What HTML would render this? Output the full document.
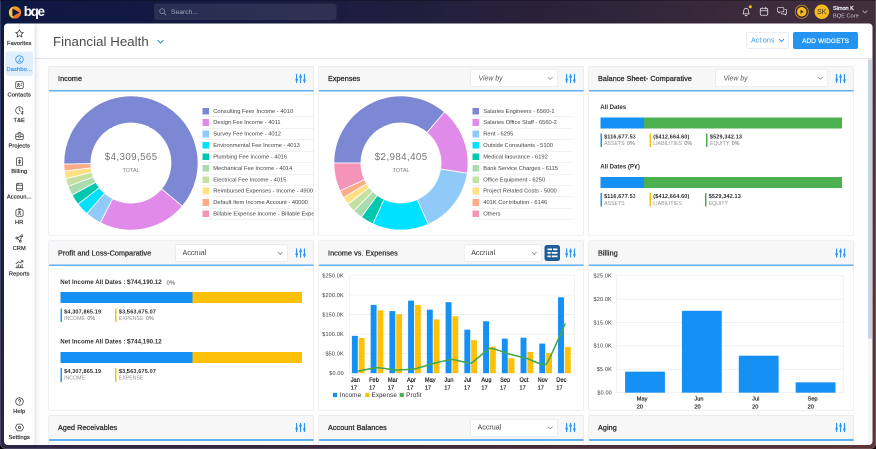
<!DOCTYPE html>
<html><head><meta charset="utf-8"><title>Financial Health</title>
<style>
*{box-sizing:border-box;margin:0;padding:0}
html,body{width:876px;height:449px;overflow:hidden;background:#000}
body{font-family:"Liberation Sans",Arial,sans-serif;}
#root{position:absolute;left:0;top:0;width:1752px;height:898px;transform:scale(.5);transform-origin:0 0;overflow:hidden;will-change:transform;
 border-radius:0 0 11px 11px;background:#1c1d40}
.bg{position:absolute}
#bgT{left:0;top:0;width:1752px;height:60px;background:linear-gradient(90deg,#0d1842 0%,#121a42 18%,#1c1d40 40%,#2b2239 63%,#3c2b3b 86%,#43303f 100%)}
#bgL{left:0;top:40px;width:20px;height:858px;background:linear-gradient(180deg,#0d1842,#2a2546)}
#bgR{left:1732px;top:40px;width:20px;height:858px;background:linear-gradient(180deg,#43303f,#5c3538)}
#bgB{left:0;top:878px;width:1752px;height:20px;background:linear-gradient(90deg,#2a2546 0%,#3f2a3a 50%,#5c3538 100%)}
#edge{position:absolute;left:0;top:0;width:1752px;height:898px;border:2px solid rgba(255,255,255,.16);border-top:2px solid rgba(0,0,0,.25);border-radius:0 0 11px 11px;z-index:50;pointer-events:none}
#top{position:absolute;left:0;top:0;width:1752px;height:46px}
#logo{position:absolute;left:16px;top:11.400px}
#logot{position:absolute;left:47.500px;top:8.300px;font-weight:700;font-size:27px;letter-spacing:-2.700px;color:#fff;line-height:30px}
#search{position:absolute;left:308px;top:7px;width:365px;height:32.500px;border-radius:6px;background:rgba(255,255,255,.095);color:#a0a5ba;font-size:13.500px;line-height:33px;padding-left:34px}
#search svg{position:absolute;left:10px;top:9px}
.ti{position:absolute;top:0}
#name{position:absolute;left:1666px;top:9px;color:#fff;font-size:11px;font-weight:400;-webkit-text-stroke:.45px #fff;line-height:15px;white-space:nowrap}
#name span{-webkit-text-stroke:0;color:#c9c6cf;font-size:11.3px}
#panel{position:absolute;left:8px;top:46.700px;width:1737px;height:843.500px;background:#fff;border-radius:8px;overflow:hidden}
#side{position:absolute;left:0;top:0;width:61px;height:843px;background:#fff;box-shadow:2px 0 10px rgba(60,80,120,.2);z-index:5}
.si{position:absolute;left:3px;width:55px;height:49px;text-align:center;font-size:11.400px;font-weight:400;-webkit-text-stroke:.450px #333;color:#333;border-radius:6px;letter-spacing:.250px}
.si svg{position:absolute;left:17.5px;top:6px}
.si span{position:absolute;left:-4px;right:-4px;top:29px;line-height:13px}
.si.act{background:#e1effc;color:#3d9bef;-webkit-text-stroke-color:#3d9bef}
#main{position:absolute;left:61px;top:0;width:1676px;height:843px;background:#fefefe}
#hdr{position:absolute;left:0;top:0;width:1676px;height:71px;background:#fff;border-bottom:2px solid #e1e7ef}
#hdr h1{position:absolute;left:37px;top:20px;font-size:26.5px;font-weight:400;color:#4a4a4a;line-height:32px;letter-spacing:.1px;white-space:nowrap}
#hdr .chev{position:absolute;left:245px;top:32px}
#act{position:absolute;left:1423.600px;top:17.600px;width:84.400px;height:33px;border:1.500px solid #d3dcea;border-radius:2.500px;color:#3d9bef;font-size:14.300px;line-height:30px;padding-left:8.400px;background:#fff}
#act svg{position:absolute;left:63.400px;top:12px}
#add{position:absolute;left:1517.300px;top:17.600px;width:129.600px;height:34px;border-radius:4px;background:#2494f1;color:#fff;font-size:13px;font-weight:400;-webkit-text-stroke:.400px #fff;line-height:35px;text-align:center;letter-spacing:.200px}
#sb{position:absolute;left:1667px;top:72px;width:7.5px;height:771px;background:#f4f6f9}
#sb div{position:absolute;left:0;top:0;width:7.5px;height:559px;background:#c8d3e2;border-radius:0 0 4px 4px}
.card{position:absolute;width:530.500px;height:339.400px;background:#fff;border:1.200px solid #dce2ea;border-radius:2.500px;overflow:hidden}
.card{margin-left:-69px;margin-top:-46.7px}
.ch{position:relative;height:50.500px;background:linear-gradient(#f7f7f7,#f7f7f7) no-repeat;background-size:100% 47px}
.ln{position:absolute;left:0;width:100%;background:#62aff2}
.ch b{position:absolute;left:18px;top:15.900px;font-size:14.300px;font-weight:400;-webkit-text-stroke:.700px #363636;line-height:16px;color:#363636;white-space:nowrap;letter-spacing:.200px;text-shadow:0 0 3px #fff}
.flt{position:absolute;left:493.100px;top:14px}
.dd{position:absolute;top:6.500px;height:35px;background:#fff;border:1.500px solid #d9dfe9;border-radius:3px;font-size:14.300px;color:#3c3c3c;line-height:31px;padding-left:13px}
.dd.it{font-style:italic;color:#585858;font-size:13.800px;padding-left:15px;line-height:33.500px}
.dd svg{position:absolute;right:9px;top:13px}
.tb{position:absolute;left:450.600px;top:8.300px;width:31.600px;height:31.400px;border-radius:5px;background:#1f5d99}
.tb svg{position:absolute;left:6px;top:7px}
.cb{position:relative;height:288px}
.dn{position:absolute;left:0;top:0}
.dt{font-size:19.500px;fill:#787878;letter-spacing:.800px}
.dl{font-size:10.5px;fill:#777;letter-spacing:.2px}
.lgs{position:absolute;left:307px;top:28px;width:260px}
.lg{position:relative;height:22.850px;border-bottom:1.5px solid #e3e3e3;white-space:nowrap;font-size:11.500px;line-height:21px;color:#444}
.lg i{position:absolute;left:0;top:4px;width:13.4px;height:13.4px}
.lg span{position:absolute;left:21.5px;top:0}
.cmp{position:absolute;left:22.600px;width:500px}
.cl{position:relative;top:1.500px;font-size:12.300px;font-weight:700;color:#333;line-height:14px;height:14px;white-space:nowrap;letter-spacing:-.100px}
.pl .cl{letter-spacing:.050px;top:1.700px}
.cl em{font-style:normal;font-weight:400;color:#3a3a3a;font-size:11.600px;margin-left:6px;letter-spacing:.300px;position:relative;top:1px}
.bar{position:absolute;left:0;top:29px;height:22px}
.bar div{height:22px}
.ci{position:absolute;top:61.500px;border-left:3px solid;padding-left:4.600px;font-size:10.400px;line-height:13.400px;white-space:nowrap;color:#555;height:27px}
.ci b{color:#2e2e2e;font-size:11px;letter-spacing:.300px}
.ci span{color:#939393;letter-spacing:0}
.ci em{font-style:normal;color:#666;margin-left:2px;font-size:10.800px}
.chart{position:absolute;left:0;top:0}
.ax{font-size:11px;fill:#3a3a3a;letter-spacing:.300px}
.xl{font-size:11.100px;font-weight:400;fill:#2e2e2e;stroke:#2e2e2e;stroke-width:.500px;letter-spacing:.150px}
.lt{font-size:12.700px;fill:#333;letter-spacing:.250px}
</style></head><body>
<div id="root">
 <div class="bg" id="bgL"></div><div class="bg" id="bgR"></div><div class="bg" id="bgB"></div><div class="bg" id="bgT"></div>
 <div id="top">
  <svg id="logo" width="28" height="28" viewBox="0 0 28 28"><defs><linearGradient id="lg1" x1="0.350" y1="0" x2="0.800" y2="1"><stop offset="0" stop-color="#f7aa2e"/><stop offset="0.500" stop-color="#f48a2c"/><stop offset="1" stop-color="#ee5c2a"/></linearGradient><clipPath id="lc"><circle cx="14" cy="14" r="12.200"/></clipPath></defs><circle cx="14" cy="14" r="12.200" fill="url(#lg1)"/><ellipse cx="5.500" cy="15" rx="6.500" ry="13" fill="#f7cb3c" clip-path="url(#lc)"/><path d="M9.600 7.200L21.400 14L9.600 20.800Z" fill="#141a44" stroke="#141a44" stroke-width="1.600" stroke-linejoin="round"/></svg>
  <div id="logot">bqe</div>
  <div id="search"><svg width="15" height="15" viewBox="0 0 15 15"><circle cx="6.3" cy="6.3" r="4.8" fill="none" stroke="#9097ad" stroke-width="1.5"/><path d="M10 10L13.6 13.6" stroke="#9097ad" stroke-width="1.5" stroke-linecap="round"/></svg>Search...</div>
  <svg class="ti" style="left:1480px" width="26" height="46" viewBox="0 0 26 46"><path transform="translate(0 -1.800)" d="M6 29.5H18.5C17 27.5 16.8 26 16.8 23A4.6 4.6 0 0 0 7.6 23C7.6 26 7.4 27.5 6 29.5ZM10.4 32A2 2 0 0 0 14.2 32" fill="none" stroke="#e8e6ee" stroke-width="1.6" stroke-linejoin="round" stroke-linecap="round"/><circle cx="20.6" cy="13.6" r="3" fill="#f8b91c"/></svg>
  <svg class="ti" style="left:1517px" width="24" height="46" viewBox="0 0 24 46"><rect x="3.5" y="16.5" width="15" height="14" rx="3" fill="none" stroke="#e8e6ee" stroke-width="1.6"/><path d="M3.5 21.5H18.5M7.5 14.5V18M14.5 14.5V18" stroke="#e8e6ee" stroke-width="1.6" stroke-linecap="round"/></svg>
  <svg class="ti" style="left:1551px" width="26" height="46" viewBox="0 0 26 46"><g transform="translate(13 22.500) scale(.920) translate(-13 -22.500)"><path d="M5.5 14.5H15A2 2 0 0 1 17 16.500V22A2 2 0 0 1 15 24H9L6 26.500V24H5.500A2 2 0 0 1 3.500 22V16.500A2 2 0 0 1 5.500 14.500Z" fill="none" stroke="#e8e6ee" stroke-width="1.5" stroke-linejoin="round"/><path d="M19.500 19H21A2 2 0 0 1 23 21V26.500A2 2 0 0 1 21 28.500V31L18 28.500H13A2 2 0 0 1 11.200 27" fill="none" stroke="#e8e6ee" stroke-width="1.500" stroke-linejoin="round" stroke-linecap="round"/></g></svg>
  <svg class="ti" style="left:1588px" width="32" height="46" viewBox="0 0 32 46"><circle cx="15.500" cy="23.500" r="13.200" fill="none" stroke="#c99a1c" stroke-width="1.500"/><circle cx="15.500" cy="23.500" r="9.400" fill="#f8b91c"/><path d="M13 19.600L19.400 23.500L13 27.400Z" fill="#3a2630"/></svg>
  <svg class="ti" style="left:1628px" width="32" height="46" viewBox="0 0 32 46"><circle cx="15.600" cy="23.500" r="14.600" fill="#f8b91c"/><text x="15.600" y="28.300" text-anchor="middle" font-size="14" font-weight="400" stroke="#5f5730" stroke-width=".4" fill="#5f5730" font-family="Liberation Sans, Arial, sans-serif">SK</text></svg>
  <div id="name">Simon K<br><span>BQE Core</span></div>
  <svg class="ti" style="left:1722px" width="16" height="46" viewBox="0 0 16 46"><path d="M3.400 21.400L8 25.800L12.600 21.400" fill="none" stroke="#c4bfcb" stroke-width="1.400" stroke-linecap="round" stroke-linejoin="round"/></svg>
 </div>
 <div id="panel">
  <div id="side"><div class="si" style="top:4.8px"><svg viewBox="0 0 20 20" width="20" height="20"><path d="M10 2.2L12.3 7.3L17.8 7.9L13.7 11.6L14.9 17L10 14.2L5.1 17L6.3 11.6L2.2 7.9L7.7 7.3Z" fill="none" stroke="#3c3c3c" stroke-width="1.5" stroke-linecap="round" stroke-linejoin="round"/></svg><span>Favorites</span></div><div class="si act" style="top:55.9px"><svg viewBox="0 0 20 20" width="20" height="20"><circle cx="10" cy="10" r="7.6" fill="none" stroke="#2f8fe8" stroke-width="1.5" stroke-linecap="round" stroke-linejoin="round"/><path d="M9.2 11.5L12.6 6.4M7.4 13.6H12.6" fill="none" stroke="#2f8fe8" stroke-width="1.5" stroke-linecap="round" stroke-linejoin="round"/></svg><span>Dashbo...</span></div><div class="si" style="top:107.0px"><svg viewBox="0 0 20 20" width="20" height="20"><rect x="2.5" y="3.2" width="15" height="13.6" rx="2.6" fill="none" stroke="#3c3c3c" stroke-width="1.5" stroke-linecap="round" stroke-linejoin="round"/><circle cx="8" cy="8.6" r="1.5" fill="none" stroke="#3c3c3c" stroke-width="1.5" stroke-linecap="round" stroke-linejoin="round"/><path d="M5.5 13.2C6 11.4 10 11.4 10.5 13.2M12.8 7.6H14.6M12.8 10.4H14.6" fill="none" stroke="#3c3c3c" stroke-width="1.5" stroke-linecap="round" stroke-linejoin="round"/></svg><span>Contacts</span></div><div class="si" style="top:158.2px"><svg viewBox="0 0 20 20" width="20" height="20"><path d="M9.5 17A7.2 7.2 0 1 1 16.6 8.6" fill="none" stroke="#3c3c3c" stroke-width="1.5" stroke-linecap="round" stroke-linejoin="round"/><path d="M9.5 5.6V9.8L12 11.4" fill="none" stroke="#3c3c3c" stroke-width="1.5" stroke-linecap="round" stroke-linejoin="round"/><path d="M17.6 12.6C15.4 11.4 13.6 13 15.6 14.4C17.8 15.6 16 17.6 13.6 16.2M15.6 11.2V18" fill="none" stroke="#3c3c3c" stroke-width="1.5" stroke-linecap="round" stroke-linejoin="round" stroke-width="1.2"/></svg><span>T&amp;E</span></div><div class="si" style="top:209.4px"><svg viewBox="0 0 20 20" width="20" height="20"><rect x="2.5" y="6" width="15" height="11" rx="2.4" fill="none" stroke="#3c3c3c" stroke-width="1.5" stroke-linecap="round" stroke-linejoin="round"/><path d="M7 6V4.6A1.4 1.4 0 0 1 8.4 3.2H11.6A1.4 1.4 0 0 1 13 4.6V6M2.5 11H8M12 11H17.5" fill="none" stroke="#3c3c3c" stroke-width="1.5" stroke-linecap="round" stroke-linejoin="round"/><rect x="8" y="9.6" width="4" height="2.8" rx=".8" fill="none" stroke="#3c3c3c" stroke-width="1.5" stroke-linecap="round" stroke-linejoin="round"/></svg><span>Projects</span></div><div class="si" style="top:260.5px"><svg viewBox="0 0 20 20" width="20" height="20"><path d="M4 4.6A2 2 0 0 1 6 2.6H14A2 2 0 0 1 16 4.6V17.4H4Z" fill="none" stroke="#3c3c3c" stroke-width="1.5" stroke-linecap="round" stroke-linejoin="round"/><path d="M12 7.8C10.4 6.6 8 7.4 8.6 9C9.2 10.4 12 9.8 12 11.6C12 13 9.6 13.4 8 12.2M10 6V14.4" fill="none" stroke="#3c3c3c" stroke-width="1.5" stroke-linecap="round" stroke-linejoin="round" stroke-width="1.2"/></svg><span>Billing</span></div><div class="si" style="top:311.6px"><svg viewBox="0 0 20 20" width="20" height="20"><rect x="4" y="2.6" width="12" height="14.8" rx="3" fill="none" stroke="#3c3c3c" stroke-width="1.5" stroke-linecap="round" stroke-linejoin="round"/><path d="M4 6.6H16M7 2.6V6.6M4 13.4H16" fill="none" stroke="#3c3c3c" stroke-width="1.5" stroke-linecap="round" stroke-linejoin="round" stroke-width="1.2"/></svg><span>Accoun...</span></div><div class="si" style="top:362.8px"><svg viewBox="0 0 20 20" width="20" height="20"><rect x="2.8" y="4.6" width="14.4" height="12.8" rx="2.6" fill="none" stroke="#3c3c3c" stroke-width="1.5" stroke-linecap="round" stroke-linejoin="round"/><circle cx="10" cy="9" r="1.5" fill="none" stroke="#3c3c3c" stroke-width="1.5" stroke-linecap="round" stroke-linejoin="round"/><path d="M7 14.4C7.4 11.8 12.6 11.8 13 14.4M8 2.4H12M10 2.4V4.6" fill="none" stroke="#3c3c3c" stroke-width="1.5" stroke-linecap="round" stroke-linejoin="round"/></svg><span>HR</span></div><div class="si" style="top:413.9px"><svg viewBox="0 0 20 20" width="20" height="20"><circle cx="14.6" cy="4.6" r="1.9" fill="none" stroke="#3c3c3c" stroke-width="1.5" stroke-linecap="round" stroke-linejoin="round"/><circle cx="4.6" cy="9" r="1.9" fill="none" stroke="#3c3c3c" stroke-width="1.5" stroke-linecap="round" stroke-linejoin="round"/><circle cx="11.6" cy="15.6" r="1.9" fill="none" stroke="#3c3c3c" stroke-width="1.5" stroke-linecap="round" stroke-linejoin="round"/><path d="M12.8 5.4L6.4 8.2M6 10.4L10.4 14.2M13.8 6.4L12.2 13.8" fill="none" stroke="#3c3c3c" stroke-width="1.5" stroke-linecap="round" stroke-linejoin="round"/></svg><span>CRM</span></div><div class="si" style="top:465.1px"><svg viewBox="0 0 20 20" width="20" height="20"><path d="M2.6 17.4H17.4M5 17V13M8.4 17V11M11.8 17V12.6M15.2 17V10" fill="none" stroke="#3c3c3c" stroke-width="1.5" stroke-linecap="round" stroke-linejoin="round" stroke-width="1.7"/><path d="M3 9.6L8 5.4L11.6 8L16.6 3.4M13.6 3.2H16.8V6.2" fill="none" stroke="#3c3c3c" stroke-width="1.5" stroke-linecap="round" stroke-linejoin="round" stroke-width="1.2"/></svg><span>Reports</span></div><div class="si" style="top:740.8px"><svg viewBox="0 0 20 20" width="20" height="20"><circle cx="10" cy="10" r="7.6" fill="none" stroke="#3c3c3c" stroke-width="1.5" stroke-linecap="round" stroke-linejoin="round"/><path d="M7.8 8A2.2 2.2 0 1 1 10.8 10.2C10.2 10.5 10 10.9 10 11.6M10 14V14.2" fill="none" stroke="#3c3c3c" stroke-width="1.5" stroke-linecap="round" stroke-linejoin="round"/></svg><span>Help</span></div><div class="si" style="top:792.3px"><svg viewBox="0 0 20 20" width="20" height="20"><path d="M6.800 3.200H13.200Q14.400 3.200 15 4.200L17.600 9Q18.100 10 17.600 11L15 15.800Q14.400 16.800 13.200 16.800H6.800Q5.600 16.800 5 15.800L2.400 11Q1.900 10 2.400 9L5 4.200Q5.600 3.200 6.800 3.200Z" fill="none" stroke="#3c3c3c" stroke-width="1.5" stroke-linecap="round" stroke-linejoin="round"/><circle cx="10" cy="10" r="2.300" fill="none" stroke="#3c3c3c" stroke-width="1.5" stroke-linecap="round" stroke-linejoin="round"/></svg><span>Settings</span></div></div>
  <div id="main">
   <div id="hdr"><h1>Financial Health</h1>
    <svg class="chev" width="14" height="9" viewBox="0 0 14 9"><path d="M1.500 1.500L7 7L12.500 1.500" fill="none" stroke="#2f8fe8" stroke-width="2" stroke-linecap="round" stroke-linejoin="round"/></svg>
    <div id="act">Actions<svg width="12" height="8" viewBox="0 0 12 8"><path d="M1.500 1.500L6 6L10.500 1.500" fill="none" stroke="#2f8fe8" stroke-width="1.800" stroke-linecap="round" stroke-linejoin="round"/></svg></div>
    <div id="add">ADD WIDGETS</div>
   </div>
   <div id="sb"><div></div></div>
   <div class="card" style="left:97px;top:132.0px"><div class="ch"><b>Income</b><svg class="flt" viewBox="0 0 20 20" width="20" height="20"><g stroke="#2d96f2" stroke-width="2.400" stroke-linecap="round" fill="#2d96f2"><path d="M2.200 2V18M10.100 2V18M17.900 2V18" fill="none"/><circle cx="2.200" cy="12.200" r="2.600" stroke="none"/><circle cx="10.100" cy="6.600" r="2.600" stroke="none"/><circle cx="17.900" cy="13.600" r="2.600" stroke="none"/></g></svg><div class="ln" style="top:46.8px;height:3.7px"></div></div><div class="cb"><svg class="dn" width="300" height="290" viewBox="0 0 300 290"><path d="M29.72 144.11A134.2 134.2 0 1 1 266.55 228.44L225.09 193.53A80 80 0 1 0 83.91 143.26Z" fill="#7c88d3" stroke="#fff" stroke-width="1.700" stroke-linejoin="round"/>
<path d="M266.55 228.44A134.2 134.2 0 0 1 102.77 261.47L127.46 213.22A80 80 0 0 0 225.09 193.53Z" fill="#E08BEA" stroke="#fff" stroke-width="1.700" stroke-linejoin="round"/>
<path d="M102.77 261.47A134.2 134.2 0 0 1 75.68 243.13L111.31 202.29A80 80 0 0 0 127.46 213.22Z" fill="#90CAF9" stroke="#fff" stroke-width="1.700" stroke-linejoin="round"/>
<path d="M75.68 243.13A134.2 134.2 0 0 1 58.00 224.44L100.77 191.14A80 80 0 0 0 111.31 202.29Z" fill="#00E0FF" stroke="#fff" stroke-width="1.700" stroke-linejoin="round"/>
<path d="M58.00 224.44A134.2 134.2 0 0 1 46.07 206.24L93.66 180.30A80 80 0 0 0 100.77 191.14Z" fill="#00C8AE" stroke="#fff" stroke-width="1.700" stroke-linejoin="round"/>
<path d="M46.07 206.24A134.2 134.2 0 0 1 38.04 188.56L88.87 169.75A80 80 0 0 0 93.66 180.30Z" fill="#A9DCB0" stroke="#fff" stroke-width="1.700" stroke-linejoin="round"/>
<path d="M38.04 188.56A134.2 134.2 0 0 1 33.41 173.33L86.11 160.68A80 80 0 0 0 88.87 169.75Z" fill="#C3E1A0" stroke="#fff" stroke-width="1.700" stroke-linejoin="round"/>
<path d="M33.41 173.33A134.2 134.2 0 0 1 30.67 158.12L84.48 151.61A80 80 0 0 0 86.11 160.68Z" fill="#FFE082" stroke="#fff" stroke-width="1.700" stroke-linejoin="round"/>
<path d="M30.67 158.12A134.2 134.2 0 0 1 29.72 144.11L83.91 143.26A80 80 0 0 0 84.48 151.61Z" fill="#FFAB88" stroke="#fff" stroke-width="1.700" stroke-linejoin="round"/><text x="164.400" y="136" text-anchor="middle" class="dt">$4,309,565</text><text x="164.200" y="159.700" text-anchor="middle" class="dl">TOTAL</text></svg><div class="lgs" style="width:260px"><div class="lg"><i style="background:#7c88d3"></i><span>Consulting Fees Income - 4010</span></div><div class="lg"><i style="background:#E08BEA"></i><span>Design Fee Income - 4011</span></div><div class="lg"><i style="background:#90CAF9"></i><span>Survey Fee Income - 4012</span></div><div class="lg"><i style="background:#00E0FF"></i><span>Environmental Fee Income - 4013</span></div><div class="lg"><i style="background:#00C8AE"></i><span>Plumbing Fee Income - 4016</span></div><div class="lg"><i style="background:#A9DCB0"></i><span>Mechanical Fee Income - 4014</span></div><div class="lg"><i style="background:#C3E1A0"></i><span>Electrical Fee Income - 4015</span></div><div class="lg"><i style="background:#FFE082"></i><span>Reimbursed Expenses - Income - 4900</span></div><div class="lg"><i style="background:#FFAB88"></i><span>Default Item Income Account - 40000</span></div><div class="lg"><i style="background:#f594b6"></i><span>Billable Expense Income - Billable Expense</span></div></div></div></div><div class="card" style="left:637px;top:132.0px"><div class="ch"><b>Expenses</b><div class="dd it" style="left:303px;width:175px;top:5.5px"><span>View by</span><svg viewBox="0 0 12 8" width="11" height="7"><path d="M1 1.5L6 6.5L11 1.5" fill="none" stroke="#666" stroke-width="1.3" stroke-linecap="round" stroke-linejoin="round"/></svg></div><svg class="flt" viewBox="0 0 20 20" width="20" height="20"><g stroke="#2d96f2" stroke-width="2.400" stroke-linecap="round" fill="#2d96f2"><path d="M2.200 2V18M10.100 2V18M17.900 2V18" fill="none"/><circle cx="2.200" cy="12.200" r="2.600" stroke="none"/><circle cx="10.100" cy="6.600" r="2.600" stroke="none"/><circle cx="17.900" cy="13.600" r="2.600" stroke="none"/></g></svg><div class="ln" style="top:46.8px;height:3.7px"></div></div><div class="cb"><svg class="dn" width="300" height="290" viewBox="0 0 300 290"><path d="M29.70 142.00A134.2 134.2 0 0 1 251.06 39.95L215.86 81.17A80 80 0 0 0 83.90 142.00Z" fill="#7c88d3" stroke="#fff" stroke-width="1.700" stroke-linejoin="round"/>
<path d="M251.06 39.95A134.2 134.2 0 0 1 296.56 162.30L242.98 154.10A80 80 0 0 0 215.86 81.17Z" fill="#E08BEA" stroke="#fff" stroke-width="1.700" stroke-linejoin="round"/>
<path d="M296.56 162.30A134.2 134.2 0 0 1 218.48 264.60L196.44 215.08A80 80 0 0 0 242.98 154.10Z" fill="#90CAF9" stroke="#fff" stroke-width="1.700" stroke-linejoin="round"/>
<path d="M218.48 264.60A134.2 134.2 0 0 1 107.61 263.82L130.34 214.62A80 80 0 0 0 196.44 215.08Z" fill="#00E0FF" stroke="#fff" stroke-width="1.700" stroke-linejoin="round"/>
<path d="M107.61 263.82A134.2 134.2 0 0 1 84.64 250.29L116.65 206.56A80 80 0 0 0 130.34 214.62Z" fill="#00C8AE" stroke="#fff" stroke-width="1.700" stroke-linejoin="round"/>
<path d="M84.64 250.29A134.2 134.2 0 0 1 69.67 237.55L107.73 198.96A80 80 0 0 0 116.65 206.56Z" fill="#A9DCB0" stroke="#fff" stroke-width="1.700" stroke-linejoin="round"/>
<path d="M69.67 237.55A134.2 134.2 0 0 1 57.86 224.25L100.69 191.03A80 80 0 0 0 107.73 198.96Z" fill="#C3E1A0" stroke="#fff" stroke-width="1.700" stroke-linejoin="round"/>
<path d="M57.86 224.25A134.2 134.2 0 0 1 48.87 211.12L95.33 183.20A80 80 0 0 0 100.69 191.03Z" fill="#FFE082" stroke="#fff" stroke-width="1.700" stroke-linejoin="round"/>
<path d="M48.87 211.12A134.2 134.2 0 0 1 41.78 197.65L91.10 175.18A80 80 0 0 0 95.33 183.20Z" fill="#FFAB88" stroke="#fff" stroke-width="1.700" stroke-linejoin="round"/>
<path d="M41.78 197.65A134.2 134.2 0 0 1 29.70 142.00L83.90 142.00A80 80 0 0 0 91.10 175.18Z" fill="#f594b6" stroke="#fff" stroke-width="1.700" stroke-linejoin="round"/><text x="164.400" y="136" text-anchor="middle" class="dt">$2,984,405</text><text x="164.200" y="159.700" text-anchor="middle" class="dl">TOTAL</text></svg><div class="lgs" style="width:199.5px"><div class="lg"><i style="background:#7c88d3"></i><span>Salaries Engineers - 6560-1</span></div><div class="lg"><i style="background:#E08BEA"></i><span>Salaries Office Staff - 6560-2</span></div><div class="lg"><i style="background:#90CAF9"></i><span>Rent - 6295</span></div><div class="lg"><i style="background:#00E0FF"></i><span>Outside Consultants - 5100</span></div><div class="lg"><i style="background:#00C8AE"></i><span>Medical Insurance - 6192</span></div><div class="lg"><i style="background:#A9DCB0"></i><span>Bank Service Charges - 6115</span></div><div class="lg"><i style="background:#C3E1A0"></i><span>Office Equipment - 6250</span></div><div class="lg"><i style="background:#FFE082"></i><span>Project Related Costs - 5000</span></div><div class="lg"><i style="background:#FFAB88"></i><span>401K Contribution - 6146</span></div><div class="lg"><i style="background:#f594b6"></i><span>Others</span></div></div></div></div><div class="card" style="left:1177px;top:132.0px"><div class="ch"><b>Balance Sheet- Comparative</b><div class="dd it" style="left:253px;width:225px;top:5.5px"><span>View by</span><svg viewBox="0 0 12 8" width="11" height="7"><path d="M1 1.5L6 6.5L11 1.5" fill="none" stroke="#666" stroke-width="1.3" stroke-linecap="round" stroke-linejoin="round"/></svg></div><svg class="flt" viewBox="0 0 20 20" width="20" height="20"><g stroke="#2d96f2" stroke-width="2.400" stroke-linecap="round" fill="#2d96f2"><path d="M2.200 2V18M10.100 2V18M17.900 2V18" fill="none"/><circle cx="2.200" cy="12.200" r="2.600" stroke="none"/><circle cx="10.100" cy="6.600" r="2.600" stroke="none"/><circle cx="17.900" cy="13.600" r="2.600" stroke="none"/></g></svg><div class="ln" style="top:46.8px;height:3.7px"></div></div><div class="cb"><div class="cmp" style="top:22px"><div class="cl">All Dates</div><div class="bar" style="width:483px;background:#4caf50"><div style="width:87px;background:#1590f4"></div></div><div class="ci" style="left:0px;border-color:#2196f3"><b>$116,677.53</b><br><span>ASSETS</span> <em>0%</em></div><div class="ci" style="left:98.4px;border-color:#ffc107"><b>($412,664.60)</b><br><span>LIABILITIES</span> <em>0%</em></div><div class="ci" style="left:211.6px;border-color:#4caf50"><b>$529,342.13</b><br><span>EQUITY</span> <em>0%</em></div></div><div class="cmp" style="top:141.2px"><div class="cl">All Dates (PY)</div><div class="bar" style="width:483px;background:#4caf50"><div style="width:87px;background:#1590f4"></div></div><div class="ci" style="left:0px;border-color:#2196f3"><b>$116,677.53</b><br><span>ASSETS</span></div><div class="ci" style="left:98.4px;border-color:#ffc107"><b>($412,664.60)</b><br><span>LIABILITIES</span></div><div class="ci" style="left:209.2px;border-color:#4caf50"><b>$529,342.13</b><br><span>EQUITY</span></div></div></div></div><div class="card" style="left:97px;top:481.2px"><div class="ch"><b>Profit and Loss-Comparative</b><div class="dd" style="left:253px;width:225px;top:6.5px"><span>Accrual</span><svg viewBox="0 0 12 8" width="11" height="7"><path d="M1 1.5L6 6.5L11 1.5" fill="none" stroke="#666" stroke-width="1.3" stroke-linecap="round" stroke-linejoin="round"/></svg></div><svg class="flt" viewBox="0 0 20 20" width="20" height="20"><g stroke="#2d96f2" stroke-width="2.400" stroke-linecap="round" fill="#2d96f2"><path d="M2.200 2V18M10.100 2V18M17.900 2V18" fill="none"/><circle cx="2.200" cy="12.200" r="2.600" stroke="none"/><circle cx="10.100" cy="6.600" r="2.600" stroke="none"/><circle cx="17.900" cy="13.600" r="2.600" stroke="none"/></g></svg><div class="ln" style="top:47.3px;height:2.7px"></div></div><div class="cb"><div class="cmp pl" style="top:22.7px"><div class="cl">Net Income All Dates : $744,190.12 <em class="p0">0%</em></div><div class="bar" style="width:483px;background:#ffc107"><div style="width:264px;background:#1590f4"></div></div><div class="ci" style="left:0px;border-color:#2196f3"><b>$4,307,865.19</b><br><span>INCOME</span> <em>0%</em></div><div class="ci" style="left:109.6px;border-color:#ffc107"><b>$3,563,675.07</b><br><span>EXPENSE</span> <em>0%</em></div></div><div class="cmp pl" style="top:141.9px"><div class="cl">Net Income All Dates : $744,190.12</div><div class="bar" style="width:483px;background:#ffc107"><div style="width:264px;background:#1590f4"></div></div><div class="ci" style="left:0px;border-color:#2196f3"><b>$4,307,865.19</b><br><span>INCOME</span></div><div class="ci" style="left:109.6px;border-color:#ffc107"><b>$3,563,675.07</b><br><span>EXPENSE</span></div></div></div></div><div class="card" style="left:637px;top:481.2px"><div class="ch"><b>Income vs. Expenses</b><div class="dd" style="left:290.4px;width:156px;top:6.5px"><span>Accrual</span><svg viewBox="0 0 12 8" width="11" height="7"><path d="M1 1.5L6 6.5L11 1.5" fill="none" stroke="#666" stroke-width="1.3" stroke-linecap="round" stroke-linejoin="round"/></svg></div><div class="tb"><svg viewBox="0 0 20 18" width="20" height="18"><g fill="#fff"><rect x="0" y="0" width="9" height="3.4" rx=".6"/><rect x="11" y="0" width="9" height="3.4" rx=".6"/><rect x="0" y="7" width="6.5" height="3.4" rx=".6"/><rect x="8.5" y="7" width="11.5" height="3.4" rx=".6"/><rect x="0" y="14" width="6.5" height="3.4" rx=".6"/><rect x="8.5" y="14" width="11.5" height="3.4" rx=".6"/></g></svg></div><svg class="flt" viewBox="0 0 20 20" width="20" height="20"><g stroke="#2d96f2" stroke-width="2.400" stroke-linecap="round" fill="#2d96f2"><path d="M2.200 2V18M10.100 2V18M17.900 2V18" fill="none"/><circle cx="2.200" cy="12.200" r="2.600" stroke="none"/><circle cx="10.100" cy="6.600" r="2.600" stroke="none"/><circle cx="17.900" cy="13.600" r="2.600" stroke="none"/></g></svg><div class="ln" style="top:47.3px;height:2.7px"></div></div><div class="cb"><svg class="chart" width="529" height="288" viewBox="0 0 529 288"><path d="M60.8 18.1H510.6" stroke="#ececec" stroke-width="1.400"/><text x="49.6" y="21.7" text-anchor="end" class="ax">$250.0K</text><path d="M60.8 57.1H510.6" stroke="#ececec" stroke-width="1.400"/><text x="49.6" y="60.7" text-anchor="end" class="ax">$200.0K</text><path d="M60.8 96.2H510.6" stroke="#ececec" stroke-width="1.400"/><text x="49.6" y="99.8" text-anchor="end" class="ax">$150.0K</text><path d="M60.8 135.2H510.6" stroke="#ececec" stroke-width="1.400"/><text x="49.6" y="138.8" text-anchor="end" class="ax">$100.0K</text><path d="M60.8 174.3H510.6" stroke="#ececec" stroke-width="1.400"/><text x="49.6" y="177.9" text-anchor="end" class="ax">$50.0K</text><path d="M60.8 213.3H510.6" stroke="#ececec" stroke-width="1.400"/><text x="49.6" y="216.9" text-anchor="end" class="ax">$0.00</text><path d="M60.8 18.1V213.3M510.6 18.1V213.3" stroke="#ececec" stroke-width="1.400"/><rect x="65.8" y="138.7" width="11.8" height="74.6" fill="#1590f4"/><rect x="79.4" y="143.0" width="11.8" height="70.3" fill="#ffc107"/><text x="63.4" y="229.7" class="xl">Jan</text><text x="63.4" y="245.5" class="xl">17</text><rect x="103.3" y="76.7" width="11.8" height="136.6" fill="#1590f4"/><rect x="116.9" y="87.6" width="11.8" height="125.7" fill="#ffc107"/><text x="100.2" y="229.7" class="xl">Feb</text><text x="100.2" y="245.5" class="xl">17</text><rect x="140.8" y="89.2" width="11.8" height="124.1" fill="#1590f4"/><rect x="154.4" y="95.4" width="11.8" height="117.9" fill="#ffc107"/><text x="137.7" y="229.7" class="xl">Mar</text><text x="137.7" y="245.5" class="xl">17</text><rect x="178.2" y="68.3" width="11.8" height="145.0" fill="#1590f4"/><rect x="191.9" y="77.0" width="11.8" height="136.3" fill="#ffc107"/><text x="176.1" y="229.7" class="xl">Apr</text><text x="176.1" y="245.5" class="xl">17</text><rect x="215.7" y="86.3" width="11.8" height="127.0" fill="#1590f4"/><rect x="229.3" y="105.7" width="11.8" height="107.6" fill="#ffc107"/><text x="211.8" y="229.7" class="xl">May</text><text x="211.8" y="245.5" class="xl">17</text><rect x="253.2" y="71.4" width="11.8" height="141.9" fill="#1590f4"/><rect x="266.8" y="99.5" width="11.8" height="113.8" fill="#ffc107"/><text x="250.8" y="229.7" class="xl">Jun</text><text x="250.8" y="245.5" class="xl">17</text><rect x="290.7" y="126.2" width="11.8" height="87.1" fill="#1590f4"/><rect x="304.3" y="147.4" width="11.8" height="65.9" fill="#ffc107"/><text x="290.1" y="229.7" class="xl">Jul</text><text x="290.1" y="245.5" class="xl">17</text><rect x="328.2" y="109.5" width="11.8" height="103.8" fill="#1590f4"/><rect x="341.8" y="160.4" width="11.8" height="52.9" fill="#ffc107"/><text x="324.8" y="229.7" class="xl">Aug</text><text x="324.8" y="245.5" class="xl">17</text><rect x="365.7" y="144.2" width="11.8" height="69.1" fill="#1590f4"/><rect x="379.3" y="183.6" width="11.8" height="29.7" fill="#ffc107"/><text x="362.3" y="229.7" class="xl">Sep</text><text x="362.3" y="245.5" class="xl">17</text><rect x="403.1" y="142.4" width="11.8" height="70.9" fill="#1590f4"/><rect x="416.7" y="171.0" width="11.8" height="42.3" fill="#ffc107"/><text x="401.0" y="229.7" class="xl">Oct</text><text x="401.0" y="245.5" class="xl">17</text><rect x="440.6" y="154.2" width="11.8" height="59.1" fill="#1590f4"/><rect x="454.2" y="172.9" width="11.8" height="40.4" fill="#ffc107"/><text x="437.3" y="229.7" class="xl">Nov</text><text x="437.3" y="245.5" class="xl">17</text><rect x="478.1" y="61.5" width="11.8" height="151.8" fill="#1590f4"/><rect x="491.7" y="161.0" width="11.8" height="52.3" fill="#ffc107"/><text x="474.8" y="229.7" class="xl">Dec</text><text x="474.8" y="245.5" class="xl">17</text><path d="M79.5 208.9C82.2 208.5 111.8 202.5 117.0 202.4C122.3 202.2 149.3 206.9 154.5 207.1C159.8 207.2 186.7 205.6 192.0 204.7C197.2 203.8 224.2 195.1 229.5 193.8C234.7 192.5 261.7 186.0 267.0 186.0C272.2 185.9 299.2 194.6 304.4 193.0C309.7 191.4 336.7 164.8 341.9 163.6C347.2 162.3 374.2 173.3 379.4 174.7C384.7 176.2 411.6 182.7 416.9 184.2C422.1 185.6 449.1 200.2 454.4 195.3C459.6 190.5 489.2 120.7 491.9 115.1" fill="none" stroke="#43a94a" stroke-width="3.200" stroke-linecap="round" stroke-linejoin="round"/><rect x="27.8" y="252.7" width="8.400" height="8.400" fill="#1590f4"/><text x="41.4" y="260.9" class="lt">Income</text><rect x="92.6" y="252.7" width="8.400" height="8.400" fill="#ffc107"/><text x="105.0" y="260.9" class="lt">Expense</text><rect x="161.2" y="252.7" width="8.400" height="8.400" fill="#4caf50"/><text x="174.2" y="260.9" class="lt">Profit</text></svg></div></div><div class="card" style="left:1177px;top:481.2px"><div class="ch"><b>Billing</b><svg class="flt" viewBox="0 0 20 20" width="20" height="20"><g stroke="#2d96f2" stroke-width="2.400" stroke-linecap="round" fill="#2d96f2"><path d="M2.200 2V18M10.100 2V18M17.900 2V18" fill="none"/><circle cx="2.200" cy="12.200" r="2.600" stroke="none"/><circle cx="10.100" cy="6.600" r="2.600" stroke="none"/><circle cx="17.900" cy="13.600" r="2.600" stroke="none"/></g></svg><div class="ln" style="top:47.3px;height:2.7px"></div></div><div class="cb"><svg class="chart" width="529" height="288" viewBox="0 0 529 288"><path d="M54.6 18.5H509.4" stroke="#ececec" stroke-width="1.400"/><text x="45.8" y="22.1" text-anchor="end" class="ax">$25.0K</text><path d="M54.6 65.3H509.4" stroke="#ececec" stroke-width="1.400"/><text x="45.8" y="68.9" text-anchor="end" class="ax">$20.0K</text><path d="M54.6 112.0H509.4" stroke="#ececec" stroke-width="1.400"/><text x="45.8" y="115.6" text-anchor="end" class="ax">$15.0K</text><path d="M54.6 158.8H509.4" stroke="#ececec" stroke-width="1.400"/><text x="45.8" y="162.4" text-anchor="end" class="ax">$10.0K</text><path d="M54.6 205.5H509.4" stroke="#ececec" stroke-width="1.400"/><text x="45.8" y="209.1" text-anchor="end" class="ax">$5.0K</text><path d="M54.6 252.3H509.4" stroke="#ececec" stroke-width="1.400"/><text x="45.8" y="255.9" text-anchor="end" class="ax">$0.00</text><path d="M54.6 18.5V252.3M509.4 18.5V252.3" stroke="#ececec" stroke-width="1.400"/><rect x="72.2" y="210.3" width="79.6" height="42.0" fill="#1590f4"/><text x="95.5" y="268.3" class="xl">May</text><text x="95.5" y="283.9" class="xl">20</text><rect x="185.9" y="88.6" width="79.6" height="163.7" fill="#1590f4"/><text x="210.8" y="268.3" class="xl">Jun</text><text x="210.8" y="283.9" class="xl">20</text><rect x="299.6" y="178.4" width="79.6" height="73.9" fill="#1590f4"/><text x="326.3" y="268.3" class="xl">Jul</text><text x="326.3" y="283.9" class="xl">20</text><rect x="413.3" y="231.7" width="79.6" height="20.6" fill="#1590f4"/><text x="437.2" y="268.3" class="xl">Sep</text><text x="437.2" y="283.9" class="xl">20</text></svg></div></div><div class="card" style="left:97px;top:830.4px"><div class="ch"><b>Aged Receivables</b><svg class="flt" viewBox="0 0 20 20" width="20" height="20"><g stroke="#2d96f2" stroke-width="2.400" stroke-linecap="round" fill="#2d96f2"><path d="M2.200 2V18M10.100 2V18M17.900 2V18" fill="none"/><circle cx="2.200" cy="12.200" r="2.600" stroke="none"/><circle cx="10.100" cy="6.600" r="2.600" stroke="none"/><circle cx="17.900" cy="13.600" r="2.600" stroke="none"/></g></svg><div class="ln" style="top:46.8px;height:3.7px"></div></div><div class="cb"></div></div><div class="card" style="left:637px;top:830.4px"><div class="ch"><b>Account Balances</b><div class="dd" style="left:303px;width:175px;top:6.5px"><span>Accrual</span><svg viewBox="0 0 12 8" width="11" height="7"><path d="M1 1.5L6 6.5L11 1.5" fill="none" stroke="#666" stroke-width="1.3" stroke-linecap="round" stroke-linejoin="round"/></svg></div><svg class="flt" viewBox="0 0 20 20" width="20" height="20"><g stroke="#2d96f2" stroke-width="2.400" stroke-linecap="round" fill="#2d96f2"><path d="M2.200 2V18M10.100 2V18M17.900 2V18" fill="none"/><circle cx="2.200" cy="12.200" r="2.600" stroke="none"/><circle cx="10.100" cy="6.600" r="2.600" stroke="none"/><circle cx="17.900" cy="13.600" r="2.600" stroke="none"/></g></svg><div class="ln" style="top:46.8px;height:3.7px"></div></div><div class="cb"></div></div><div class="card" style="left:1177px;top:830.4px"><div class="ch"><b>Aging</b><svg class="flt" viewBox="0 0 20 20" width="20" height="20"><g stroke="#2d96f2" stroke-width="2.400" stroke-linecap="round" fill="#2d96f2"><path d="M2.200 2V18M10.100 2V18M17.900 2V18" fill="none"/><circle cx="2.200" cy="12.200" r="2.600" stroke="none"/><circle cx="10.100" cy="6.600" r="2.600" stroke="none"/><circle cx="17.900" cy="13.600" r="2.600" stroke="none"/></g></svg><div class="ln" style="top:46.8px;height:3.7px"></div></div><div class="cb"></div></div>
  </div>
 </div>
 <div id="edge"></div>
</div>
</body></html>
